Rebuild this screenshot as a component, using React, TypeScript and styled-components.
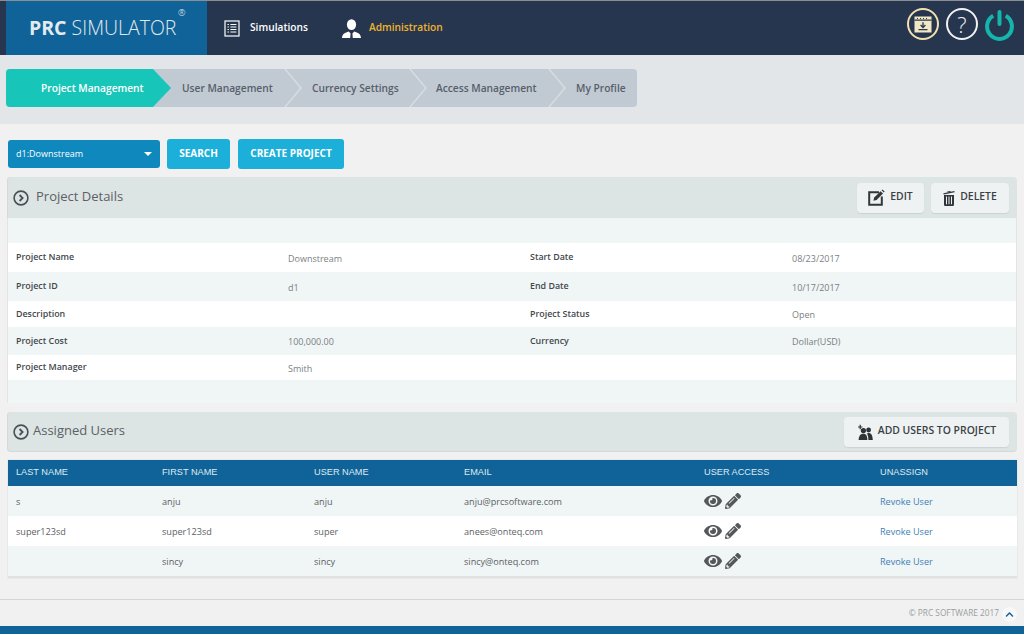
import React from 'react'
import styled, { createGlobalStyle } from 'styled-components'
import { FaEye, FaPencilAlt, FaChevronUp } from 'react-icons/fa'

const GlobalStyle = createGlobalStyle`
  html, body {
    margin: 0;
    padding: 0;
    background: #f1f1f1;
  }
  body {
    font-family: 'Open Sans', 'Liberation Sans', sans-serif;
    color: #4a4f55;
  }
  * {
    box-sizing: border-box;
  }
`

const details = [
  { tint: true, cells: ['', '', '', ''], height: 25 },
  { tint: false, cells: ['Project Name', 'Downstream', 'Start Date', '08/23/2017'], height: 29 },
  { tint: true, cells: ['Project ID', 'd1', 'End Date', '10/17/2017'], height: 29 },
  { tint: false, cells: ['Description', '', 'Project Status', 'Open'], height: 26 },
  { tint: true, cells: ['Project Cost', '100,000.00', 'Currency', 'Dollar(USD)'], height: 28 },
  { tint: false, cells: ['Project Manager', 'Smith', '', ''], height: 25 },
  { tint: true, cells: ['', '', '', ''], height: 23 },
]

const users = [
  { last: 's', first: 'anju', user: 'anju', email: 'anju@prcsoftware.com' },
  { last: 'super123sd', first: 'super123sd', user: 'super', email: 'anees@onteq.com' },
  { last: '', first: 'sincy', user: 'sincy', email: 'sincy@onteq.com' },
]

const steps = [
  { label: 'Project Management', width: 147, pad: 35 },
  { label: 'User Management', width: 131, pad: 29 },
  { label: 'Currency Settings', width: 125, pad: 28 },
  { label: 'Access Management', width: 139, pad: 27 },
  { label: 'My Profile', width: 89, pad: 28 },
]

const CircleArrow = () => (
  <svg width="16" height="16" viewBox="0 0 16 16" fill="none" stroke="#4a4f55">
    <circle cx="8" cy="8" r="6.9" strokeWidth="1.6" />
    <path d="M6.6 5 L9.6 8 L6.6 11" strokeWidth="1.8" />
  </svg>
)

const ListIcon = () => (
  <svg width="16" height="17" viewBox="0 0 16 17" fill="none" stroke="#fff">
    <rect x="1" y="1" width="14" height="15" strokeWidth="1.2" />
    <path d="M3.5 4.5h1.4M3.5 7h1.4M3.5 9.5h1.4M3.5 12h1.4M6.4 4.5h6M6.4 7h6M6.4 9.5h6M6.4 12h6" strokeWidth="1.1" />
  </svg>
)

const PersonIcon = () => (
  <svg width="19" height="19" viewBox="0 0 19 19" fill="#fff">
    <ellipse cx="9.5" cy="5.6" rx="4.6" ry="5.4" />
    <path d="M0 19 C0.4 14.8 3 13.8 6.8 12.6 L8.6 14.4 L8.2 19 Z M19 19 C18.6 14.8 16 13.8 12.2 12.6 L10.4 14.4 L10.8 19 Z" />
  </svg>
)

const DownloadWindowIcon = () => (
  <svg width="18" height="17" viewBox="0 0 18 17">
    <rect x="0.5" y="0.5" width="17" height="16" fill="#f3e6c4" />
    <path d="M3 2.5h1M6 2.5h1M9 2.5h1M12 2.5h1M0.5 4.2h17" stroke="#27364f" strokeWidth="1.2" />
    <path d="M9 6.2v5M6.6 9 L9 11.6 L11.4 9M4.5 13.6h9" stroke="#27364f" strokeWidth="1.3" fill="none" />
  </svg>
)

const PowerIcon = () => (
  <PowerSvg width="29" height="31" viewBox="0 0 29 31" fill="none" stroke="#16b5ac" strokeWidth="4">
    <path d="M8.2 5.8 A12.4 12.4 0 1 0 20.8 5.8" />
    <path d="M14.5 2 V14" strokeLinecap="round" />
  </PowerSvg>
)

const EditIcon = () => (
  <svg width="17" height="17" viewBox="0 0 17 17" fill="none">
    <path d="M11 3.2H1.2v12.6h12.6V7.6" stroke="#33373b" strokeWidth="2" />
    <path d="M5.4 11.8 L6.2 8.6 L12.6 2.2 L15 4.6 L8.6 11 Z" fill="#33373b" />
    <path d="M13.6 1.2 L14.4 0.4 L16.6 2.6 L15.8 3.4 Z" fill="#33373b" />
  </svg>
)

const TrashIcon = () => (
  <svg width="12" height="16" viewBox="0 0 12 16" fill="#33373b">
    <path d="M0.4 3.2 L11.4 1 L11.6 2.2 L0.6 4.4 Z" />
    <path d="M4.2 1.6 L7.4 1 L7.6 2 L4.4 2.6 Z" />
    <path d="M1 5h10v9.4c0 .9-.7 1.6-1.6 1.6H2.6C1.7 16 1 15.3 1 14.4Z M3 6.6v7.6h1V6.6Z M5.5 6.6v7.6h1V6.6Z M8 6.6v7.6h1V6.6Z" fillRule="evenodd" />
  </svg>
)

const AddUsersIcon = () => (
  <svg width="16" height="16" viewBox="0 0 16 16" fill="#2f3336">
    <path d="M1 2.4h1.6V.8h1.2v1.6h1.6v1.2H3.8v1.6H2.6V3.6H1Z" />
    <circle cx="6.4" cy="6.6" r="2.6" />
    <path d="M1.6 16 C1.8 11.8 3.4 9.8 6.4 9.8 C9.2 9.8 10.2 11.8 10.4 16 Z" />
    <circle cx="11.6" cy="6" r="2.4" />
    <path d="M11.4 16 C11.4 13 10.8 10.8 9.8 9.6 C10.4 9.2 11 9 11.8 9 C14.2 9 15.6 11.4 15.8 16 Z" />
  </svg>
)

const App: React.FC = () => {
  return (
    <>
      <GlobalStyle />
      <Page>
        <Header>
          <Logo>
            <LogoText>
              <strong>PRC</strong> SIMULATOR
              <LogoMark>®</LogoMark>
            </LogoText>
          </Logo>
          <NavItem>
            <ListIcon />
            <NavLabel>Simulations</NavLabel>
          </NavItem>
          <NavItem $wide>
            <PersonIcon />
            <NavLabel $active>Administration</NavLabel>
          </NavItem>
          <HeaderIcons>
            <RoundIcon $gold>
              <DownloadWindowIcon />
            </RoundIcon>
            <RoundIcon>?</RoundIcon>
            <PowerIcon />
          </HeaderIcons>
        </Header>

        <StepBand>
          <Steps>
            {steps.map((step, i) => (
              <Step key={step.label} $width={step.width} $pad={step.pad} $active={i === 0} $last={i === steps.length - 1}>
                {step.label}
              </Step>
            ))}
          </Steps>
        </StepBand>

        <Content>
          <Toolbar>
            <ProjectSelect>
              d1:Downstream
              <Caret />
            </ProjectSelect>
            <ActionButton $width={63}>SEARCH</ActionButton>
            <ActionButton $width={106}>CREATE PROJECT</ActionButton>
          </Toolbar>

          <PanelHead>
            <PanelTitle $gap={7}>
              <CircleArrow />
              <span>Project Details</span>
            </PanelTitle>
            <HeadButtons>
              <HeadButton $width={67}>
                <EditIcon />
                <span>EDIT</span>
              </HeadButton>
              <HeadButton $width={78}>
                <TrashIcon />
                <span>DELETE</span>
              </HeadButton>
            </HeadButtons>
          </PanelHead>

          <DetailBody>
            {details.map((row, i) => (
              <DetailRow key={i} $tint={row.tint} style={{ height: row.height }}>
                <DetailLabel>{row.cells[0]}</DetailLabel>
                <DetailValue>{row.cells[1]}</DetailValue>
                <DetailLabel>{row.cells[2]}</DetailLabel>
                <DetailValue>{row.cells[3]}</DetailValue>
              </DetailRow>
            ))}
          </DetailBody>

          <UsersHead>
            <PanelTitle $gap={4}>
              <CircleArrow />
              <span>Assigned Users</span>
            </PanelTitle>
            <HeadButton $width={165}>
              <AddUsersIcon />
              <span>ADD USERS TO PROJECT</span>
            </HeadButton>
          </UsersHead>

          <UsersTable>
            <UsersHeadRow>
              <span>LAST NAME</span>
              <span>FIRST NAME</span>
              <span>USER NAME</span>
              <span>EMAIL</span>
              <span>USER ACCESS</span>
              <span>UNASSIGN</span>
            </UsersHeadRow>
            {users.map((u, i) => (
              <UserRow key={u.email} $tint={i % 2 === 0}>
                <span>{u.last}</span>
                <span>{u.first}</span>
                <span>{u.user}</span>
                <span>{u.email}</span>
                <AccessIcons>
                  <FaEye size={18} />
                  <FaPencilAlt size={16} />
                </AccessIcons>
                <RevokeLink href="#">Revoke User</RevokeLink>
              </UserRow>
            ))}
          </UsersTable>
        </Content>

        <Footer>
          © PRC SOFTWARE 2017
          <ScrollTop>
            <FaChevronUp size={9} />
          </ScrollTop>
        </Footer>
        <BottomStrip />
      </Page>
    </>
  )
}

const Page = styled.div`
  width: 1024px;
  height: 634px;
  overflow: hidden;
  display: flex;
  flex-direction: column;
`

const Header = styled.header`
  height: 55px;
  flex: none;
  display: flex;
  align-items: center;
  background: #27364f;
  border-top: 1px solid #8b8f94;
  padding-left: 6px;
`

const Logo = styled.div`
  width: 201px;
  height: 100%;
  background: #0f6398;
  display: flex;
  align-items: center;
  padding: 0 0 2px 23px;
`

const LogoText = styled.div`
  position: relative;
  font-family: 'Open Sans', sans-serif;
  font-size: 19.5px;
  font-weight: 300;
  color: #e3eaef;
  white-space: nowrap;
  strong {
    font-weight: 700;
  }
`

const LogoMark = styled.span`
  position: absolute;
  top: -8px;
  right: -9px;
  font-size: 9px;
`

const NavItem = styled.div<{ $wide?: boolean }>`
  display: flex;
  align-items: center;
  gap: ${(props) => (props.$wide ? '8px' : '10px')};
  margin-left: ${(props) => (props.$wide ? '34px' : '17px')};
`

const NavLabel = styled.span<{ $active?: boolean }>`
  font-size: 10.2px;
  font-weight: 600;
  padding-bottom: 3px;
  color: ${(props) => (props.$active ? '#f0b32e' : '#ffffff')};
`

const HeaderIcons = styled.div`
  margin: 0 10px 8px auto;
  display: flex;
  align-items: center;
  gap: 7px;
`

const RoundIcon = styled.div<{ $gold?: boolean }>`
  width: 32px;
  height: 32px;
  border-radius: 50%;
  border: 2px solid ${(props) => (props.$gold ? '#f3e0ae' : '#f1f1f1')};
  display: flex;
  align-items: center;
  justify-content: center;
  color: #f1f1f1;
  font-size: 22px;
  font-weight: 300;
`

const PowerSvg = styled.svg`
  margin-top: 2px;
`

const StepBand = styled.div`
  height: 69px;
  flex: none;
  background: #e2e6e8;
  padding: 14px 6px 0;
`

const Steps = styled.div`
  display: flex;
  width: 631px;
  height: 38px;
  border-radius: 4px;
  background: #c1cad3;
`

const Step = styled.div<{ $width: number; $pad: number; $active?: boolean; $last?: boolean }>`
  position: relative;
  width: ${(props) => props.$width}px;
  padding: 0 0 1px ${(props) => props.$pad}px;
  display: flex;
  align-items: center;
  white-space: nowrap;
  font-size: 10.2px;
  font-weight: 600;
  color: ${(props) => (props.$active ? '#ffffff' : '#56606b')};
  background: ${(props) => (props.$active ? '#17c6b9' : 'transparent')};
  border-radius: ${(props) => (props.$active ? '4px 0 0 4px' : '0')};

  &::after {
    content: ${(props) => (props.$last ? 'none' : "''")};
    position: absolute;
    top: 0;
    bottom: 0;
    left: 100%;
    width: 18px;
    background: ${(props) => (props.$active ? '#17c6b9' : '#d6dce1')};
    clip-path: ${(props) =>
      props.$active
        ? 'polygon(0 0, 100% 50%, 0 100%)'
        : 'polygon(0 0, 2px 0, 100% 50%, 2px 100%, 0 100%, calc(100% - 2px) 50%)'};
  }
`

const Content = styled.main`
  flex: 1;
  padding: 15px 7px 0;
  background: #f1f1f1;
`

const Toolbar = styled.div`
  display: flex;
  align-items: flex-start;
  gap: 8px;
  padding-left: 1px;
  height: 38px;
`

const ProjectSelect = styled.div`
  width: 152px;
  height: 28px;
  margin: 1px -1px 0 0;
  border-radius: 3px;
  background: #0f88bd;
  color: #ffffff;
  display: flex;
  align-items: center;
  justify-content: space-between;
  padding: 0 8px 2px;
  font-size: 9px;
`

const Caret = styled.span`
  width: 0;
  height: 0;
  margin-top: 2px;
  border-left: 4px solid transparent;
  border-right: 4px solid transparent;
  border-top: 4.5px solid #ffffff;
`

const ActionButton = styled.button<{ $width: number }>`
  width: ${(props) => props.$width}px;
  height: 30px;
  border: 0;
  border-radius: 3px;
  background: #1cafd9;
  color: #ffffff;
  padding: 0 0 2px;
  font-family: inherit;
  font-size: 10px;
  font-weight: 700;
`

const PanelHead = styled.div`
  height: 41px;
  display: flex;
  align-items: center;
  justify-content: space-between;
  background: #dde4e4;
  border-radius: 4px 4px 0 0;
  padding: 0 8px 0 6px;
  box-shadow: inset 1px 0 0 #d3d8d8;
`

const UsersHead = styled(PanelHead)`
  height: 40px;
  margin-top: 9px;
  border-radius: 4px;
  border-bottom: 1px solid #d3d8d8;
`

const PanelTitle = styled.div<{ $gap: number }>`
  display: flex;
  align-items: center;
  gap: ${(props) => props.$gap}px;
  font-size: 13px;
  color: #5b6166;

  span {
    padding-bottom: 3px;
  }
`

const HeadButtons = styled.div`
  display: flex;
  gap: 7px;
`

const HeadButton = styled.button<{ $width: number }>`
  width: ${(props) => props.$width}px;
  height: 30px;
  border: 0;
  border-radius: 4px;
  background: #eef2f2;
  box-shadow: 0 1px 1px rgba(0, 0, 0, 0.08);
  display: flex;
  align-items: center;
  justify-content: center;
  gap: 5px;
  color: #3b4045;
  font-family: inherit;
  font-size: 10.4px;
  font-weight: 600;
  padding: 0;
  white-space: nowrap;

  span {
    padding-bottom: 3px;
  }
`

const DetailBody = styled.section`
  border: 1px solid #e2e4e4;
  border-top: 0;
  height: 185px;
`

const DetailRow = styled.div<{ $tint: boolean }>`
  display: grid;
  grid-template-columns: 272px 242px 262px 1fr;
  align-items: center;
  padding-left: 8px;
  background: ${(props) => (props.$tint ? '#f0f5f5' : '#ffffff')};
`

const DetailLabel = styled.span`
  font-size: 8.9px;
  font-weight: 600;
  padding-bottom: 2px;
  color: #43484e;
`

const DetailValue = styled.span`
  font-size: 9px;
  padding-top: 1px;
  color: #7a7f84;
`

const UsersTable = styled.section`
  margin-top: 8px;
  margin-left: 1px;
  width: 1009px;
  border-bottom: 2px solid #e0e2e2;
  box-shadow: 0 0 0 1px #e8eaea;
`

const columns = '146px 152px 150px 240px 176px 1fr'

const UsersHeadRow = styled.div`
  display: grid;
  grid-template-columns: ${columns};
  align-items: center;
  height: 26px;
  padding: 0 0 3px 8px;
  background: #0f6398;
  color: #dfe9f0;
  font-family: 'Liberation Sans', Arial, sans-serif;
  font-size: 9.2px;
`

const UserRow = styled.div<{ $tint: boolean }>`
  display: grid;
  grid-template-columns: ${columns};
  align-items: center;
  height: 30px;
  padding-left: 8px;
  background: ${(props) => (props.$tint ? '#f0f5f5' : '#ffffff')};
  font-size: 9.1px;
  color: #5c6166;
`

const AccessIcons = styled.span`
  display: flex;
  align-items: center;
  gap: 3px;
  color: #55585b;
`

const RevokeLink = styled.a`
  color: #3d7fb8;
  text-decoration: none;
`

const Footer = styled.footer`
  height: 27px;
  flex: none;
  border-top: 1px solid #d4d6d6;
  display: flex;
  align-items: center;
  justify-content: flex-end;
  gap: 3px;
  padding: 0 7px 2px 0;
  font-size: 8.3px;
  color: #9a9da0;
  background: #f1f1f1;
`

const ScrollTop = styled.span`
  width: 15px;
  height: 15px;
  border-radius: 50%;
  background: #f8f8f8;
  display: flex;
  align-items: center;
  justify-content: center;
  color: #0f6398;
  margin-top: 5px;
`

const BottomStrip = styled.div`
  height: 8px;
  flex: none;
  background: #0f6398;
`

export default App
